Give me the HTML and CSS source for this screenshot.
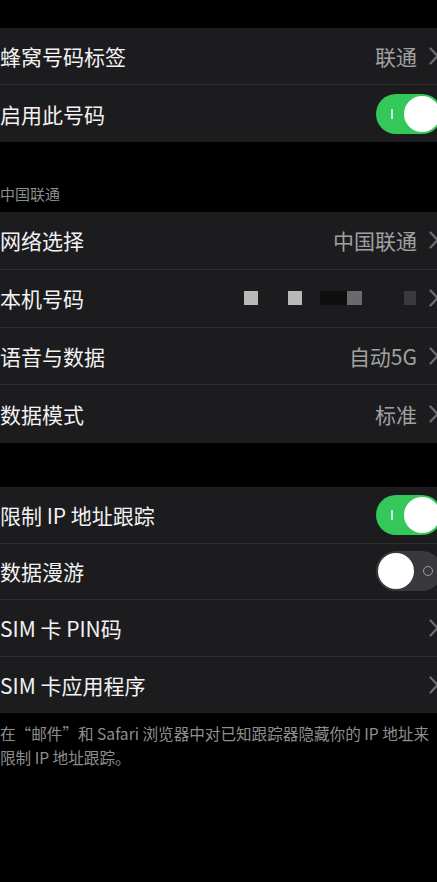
FILE: index.html
```html
<!DOCTYPE html>
<html lang="zh-CN">
<head>
<meta charset="utf-8">
<link rel="stylesheet" href="styles.css">
</head>
<body>
<div class="page">
  <div class="group g1">
    <div class="row">
      <span class="label">蜂窝号码标签</span>
      <span class="value">联通</span>
      <svg class="chev" width="10" height="18" viewBox="0 0 10 18"><path d="M1.5 1.5 L8.5 9 L1.5 16.5" fill="none" stroke="#6e6e70" stroke-width="2.2" stroke-linecap="round" stroke-linejoin="round"/></svg>
    </div>
    <div class="row">
      <span class="label">启用此号码</span>
      <span class="toggle on"><span class="bar"></span><span class="knob"></span></span>
    </div>
  </div>

  <div class="header">中国联通</div>
  <div class="group g2">
    <div class="row">
      <span class="label">网络选择</span>
      <span class="value">中国联通</span>
      <svg class="chev" width="10" height="18" viewBox="0 0 10 18"><path d="M1.5 1.5 L8.5 9 L1.5 16.5" fill="none" stroke="#6e6e70" stroke-width="2.2" stroke-linecap="round" stroke-linejoin="round"/></svg>
    </div>
    <div class="row">
      <span class="label">本机号码</span>
      <span class="blur">
        <i class="sq lt"></i><i class="sq gap1 lt"></i><i class="dk gap2"></i><i class="sq md"></i><i class="sq dm gap3"></i>
      </span>
      <svg class="chev" width="10" height="18" viewBox="0 0 10 18"><path d="M1.5 1.5 L8.5 9 L1.5 16.5" fill="none" stroke="#6e6e70" stroke-width="2.2" stroke-linecap="round" stroke-linejoin="round"/></svg>
    </div>
    <div class="row">
      <span class="label">语音与数据</span>
      <span class="value">自动5G</span>
      <svg class="chev" width="10" height="18" viewBox="0 0 10 18"><path d="M1.5 1.5 L8.5 9 L1.5 16.5" fill="none" stroke="#6e6e70" stroke-width="2.2" stroke-linecap="round" stroke-linejoin="round"/></svg>
    </div>
    <div class="row">
      <span class="label">数据模式</span>
      <span class="value">标准</span>
      <svg class="chev" width="10" height="18" viewBox="0 0 10 18"><path d="M1.5 1.5 L8.5 9 L1.5 16.5" fill="none" stroke="#6e6e70" stroke-width="2.2" stroke-linecap="round" stroke-linejoin="round"/></svg>
    </div>
  </div>

  <div class="group g3">
    <div class="row">
      <span class="label">限制 IP 地址跟踪</span>
      <span class="toggle on"><span class="bar"></span><span class="knob"></span></span>
    </div>
    <div class="row">
      <span class="label">数据漫游</span>
      <span class="toggle off"><span class="knob"></span><span class="ring"></span></span>
    </div>
    <div class="row">
      <span class="label">SIM 卡 PIN码</span>
      <span class="spacer"></span>
      <svg class="chev" width="10" height="18" viewBox="0 0 10 18"><path d="M1.5 1.5 L8.5 9 L1.5 16.5" fill="none" stroke="#6e6e70" stroke-width="2.2" stroke-linecap="round" stroke-linejoin="round"/></svg>
    </div>
    <div class="row">
      <span class="label">SIM 卡应用程序</span>
      <span class="spacer"></span>
      <svg class="chev" width="10" height="18" viewBox="0 0 10 18"><path d="M1.5 1.5 L8.5 9 L1.5 16.5" fill="none" stroke="#6e6e70" stroke-width="2.2" stroke-linecap="round" stroke-linejoin="round"/></svg>
    </div>
  </div>

  <div class="footer">
    <div class="fline">在“邮件”和 Safari 浏览器中对已知跟踪器隐藏你的 IP 地址来</div>
    <div class="fline">限制 IP 地址跟踪。</div>
  </div>
</div>
</body>
</html>
```

FILE: styles.css
```css
* { box-sizing: border-box; margin: 0; padding: 0; }
html, body {
  background: #000;
  width: 437px;
  height: 882px;
  overflow: hidden;
}
body {
  font-family: "Noto Sans CJK SC", "Noto Sans", sans-serif;
  color: #f2f2f2;
}
.page {
  padding-top: 28px;
  display: flex;
  flex-direction: column;
}
.group {
  background: #1c1c1e;
  display: flex;
  flex-direction: column;
}
.row {
  display: flex;
  align-items: center;
  height: 57px;
  border-bottom: 1px solid #2e2e30;
  margin-right: -2px;
}
.row:last-child { border-bottom: none; }
.g2 .row { height: 57.75px; }
.g3 .row { height: 56.5px; }
.label {
  font-size: 21px;
  line-height: 28px;
  flex: 1;
  white-space: nowrap;
}
.value {
  font-size: 21px;
  line-height: 28px;
  color: #a0a0a2;
  margin-right: 12px;
}
.chev { flex: none; }
.spacer { flex: 1; }
.header {
  margin-top: 42px;
  font-size: 15px;
  line-height: 20px;
  color: #8c8c8e;
  padding-bottom: 8px;
}
.g3 { margin-top: 44px; }
.footer {
  padding-top: 8px;
  font-size: 15.6px;
  line-height: 24px;
  color: #8e8e90;
}
.fline { white-space: nowrap; }

.toggle {
  position: relative;
  width: 66px;
  height: 40px;
  border-radius: 20px;
  flex: none;
  margin-right: -3px;
}
.toggle.on { background: #34c759; }
.toggle.off { background: #39393d; }
.toggle .knob {
  position: absolute;
  top: 2px;
  width: 36px;
  height: 36px;
  border-radius: 50%;
  background: #fff;
}
.toggle.on .knob { right: 2px; }
.toggle.off .knob { left: 2px; }
.toggle .bar {
  position: absolute;
  left: 15px;
  top: 15px;
  width: 1.5px;
  height: 10px;
  background: #e8f8ea;
  opacity: 0.85;
}
.toggle .ring {
  position: absolute;
  left: 47px;
  top: 15px;
  width: 10px;
  height: 10px;
  border: 1.5px solid #a0a0a4;
  border-radius: 50%;
}

.blur {
  display: flex;
  align-items: center;
  margin-right: 13px;
  height: 16px;
}
.blur i { display: block; height: 14px; }
.sq { width: 14px; }
.lt { background: #b8b8b8; }
.md { background: #6a6a6c; width: 15px; }
.dm { background: #3a3a3c; width: 12px; height: 10px; }
.gap1 { margin-left: 30px; }
.gap2 { margin-left: 18px; width: 27px; background: #0f0f10; height: 10px; }
.gap3 { margin-left: 42px; }
```
